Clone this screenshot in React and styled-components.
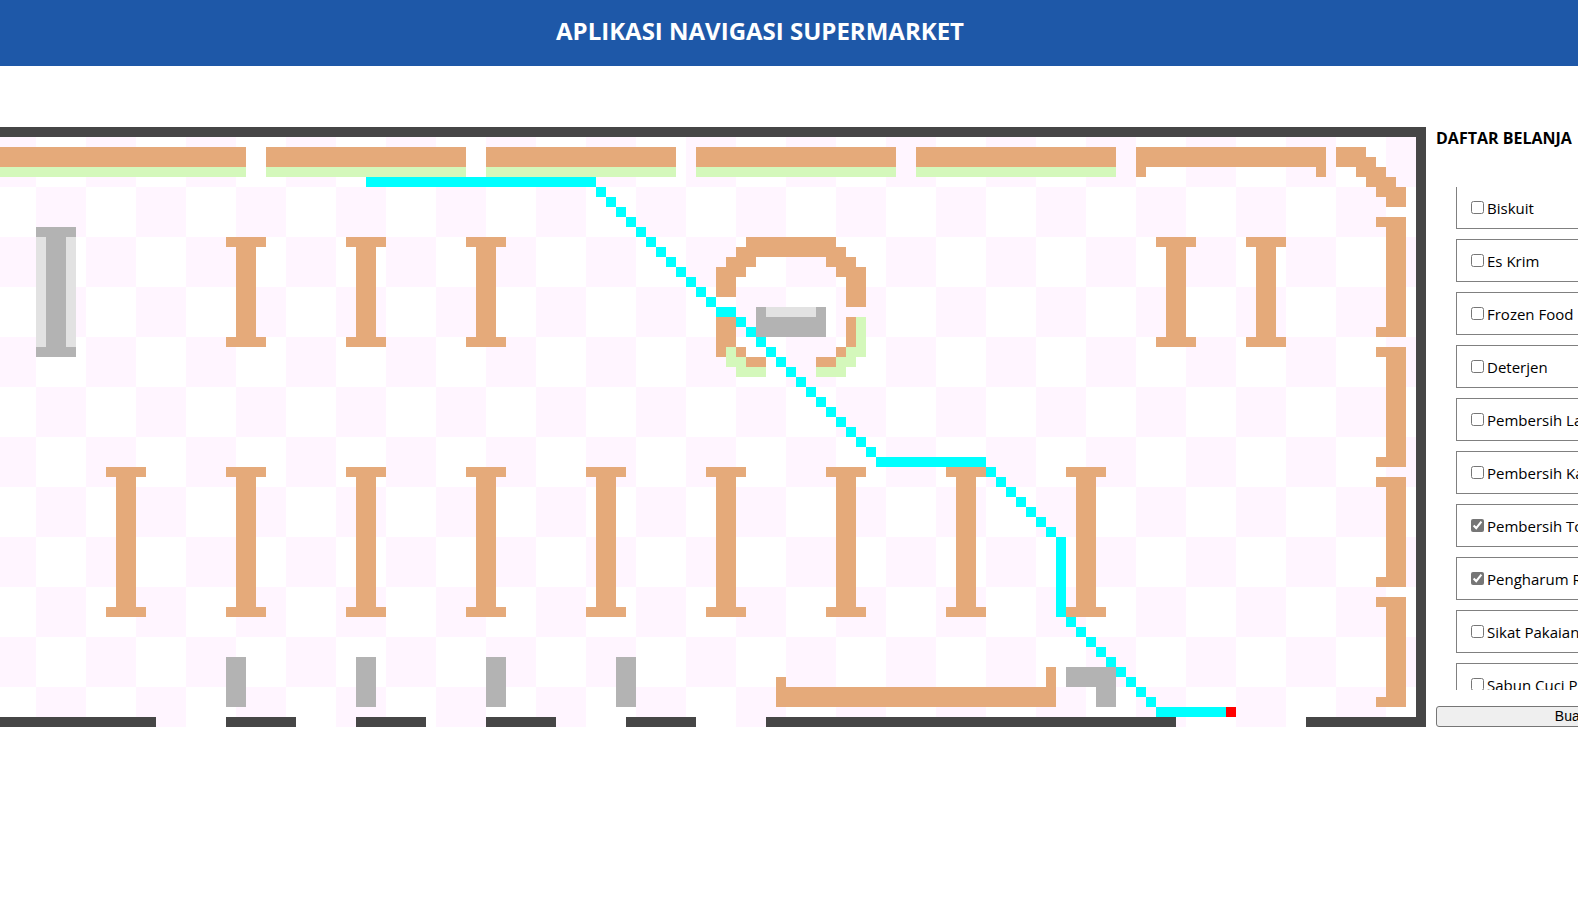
import React from "react";
import styled, { createGlobalStyle } from "styled-components";

const colors = {
  tile: "#fff5ff",
  wall: "#464646",
  shelf: "#e5aa7a",
  produce: "#d4f8bb",
  counter: "#b3b3b3",
  glass: "#e2e2e2",
  route: "#00ffff",
  start: "#ff0000",
};

// Every entry is [x, y, width, height] in grid cells.
const iShelf = (x, y, h) => [
  [x, y, 4, 1],
  [x + 1, y + 1, 2, h - 2],
  [x, y + h - 1, 4, 1],
];
const wallShelf = (y, h) => [
  [145, y, 1, 1],
  [146, y, 2, h],
  [145, y + h - 1, 1, 1],
];
const diagonal = (x, y, n) =>
  Array.from({ length: n }, (_, i) => [x + i, y + i, 1, 1]);

const walls = [
  [0, 0, 150, 1],
  [0, 0, 1, 60],
  [149, 0, 1, 60],
  [0, 59, 23, 1],
  [30, 59, 7, 1],
  [43, 59, 7, 1],
  [56, 59, 7, 1],
  [70, 59, 7, 1],
  [84, 59, 41, 1],
  [138, 59, 12, 1],
];

const topShelves = [
  [3, 29],
  [34, 20],
  [56, 19],
  [77, 20],
  [99, 20],
];

const shelves = [
  ...topShelves.map(([x, w]) => [x, 2, w, 2]),
  [121, 2, 19, 2],
  [121, 4, 1, 1],
  [139, 4, 1, 1],
  [141, 2, 3, 1],
  [141, 3, 4, 1],
  [143, 4, 3, 1],
  [144, 5, 3, 1],
  [145, 6, 3, 1],
  [146, 7, 2, 1],
  ...wallShelf(9, 12),
  ...wallShelf(22, 12),
  ...wallShelf(35, 11),
  ...wallShelf(47, 11),
  ...[30, 42, 54, 123, 132].flatMap((x) => iShelf(x, 11, 11)),
  ...[18, 30, 42, 54, 66, 78, 90, 102, 114].flatMap((x) => iShelf(x, 34, 15)),
  [85, 55, 1, 1],
  [112, 54, 1, 2],
  [85, 56, 28, 2],
  [82, 11, 9, 1],
  [81, 12, 11, 1],
  [80, 13, 3, 1],
  [90, 13, 3, 1],
  [79, 14, 3, 1],
  [91, 14, 3, 1],
  [79, 15, 2, 2],
  [92, 15, 2, 3],
  [79, 19, 2, 3],
  [79, 22, 1, 1],
  [81, 22, 1, 1],
  [82, 23, 2, 1],
  [92, 19, 1, 3],
  [91, 22, 1, 1],
  [89, 23, 2, 1],
];

const produce = [
  ...topShelves.map(([x, w]) => [x, 4, w, 1]),
  [80, 22, 1, 1],
  [80, 23, 2, 1],
  [81, 24, 3, 1],
  [93, 19, 1, 3],
  [92, 22, 2, 1],
  [91, 23, 2, 1],
  [89, 24, 3, 1],
];

const counters = [
  ...iShelf(11, 10, 13),
  [83, 18, 7, 3],
  ...[30, 43, 56, 69].map((x) => [x, 53, 2, 5]),
  [114, 54, 5, 2],
  [117, 56, 2, 2],
];

const glass = [
  [11, 11, 1, 11],
  [14, 11, 1, 11],
  [84, 18, 5, 1],
];

const route = [
  [44, 5, 23, 1],
  ...diagonal(67, 6, 12),
  [79, 18, 2, 1],
  ...diagonal(81, 19, 14),
  [95, 33, 11, 1],
  ...diagonal(106, 34, 7),
  [113, 41, 1, 8],
  ...diagonal(114, 49, 9),
  [123, 58, 7, 1],
];

const start = [[130, 58, 1, 1]];

const layers = [
  [colors.wall, walls],
  [colors.shelf, shelves],
  [colors.produce, produce],
  [colors.counter, counters],
  [colors.glass, glass],
  [colors.route, route],
  [colors.start, start],
];

const products = [
  ["Biskuit", false],
  ["Es Krim", false],
  ["Frozen Food", false],
  ["Deterjen", false],
  ["Pembersih Lantai", false],
  ["Pembersih Kaca", false],
  ["Pembersih Toilet", true],
  ["Pengharum Ruangan", true],
  ["Sikat Pakaian", false],
  ["Sabun Cuci Piring", false],
];

const GlobalStyle = createGlobalStyle`
  *, *::before, *::after { box-sizing: border-box; }
  body {
    margin: 0;
    background: #fff;
    color: #000;
    font: 15px/21px "Segoe UI", "Open Sans", "Noto Sans", sans-serif;
    overflow-x: hidden;
  }
`;

const Header = styled.header`
  display: flex;
  justify-content: center;
  padding: 15px 58px 19px 0;
  background: #1e58a8;
  color: #fff;
`;

const Title = styled.h1`
  margin: 0;
  font-size: 24px;
  line-height: 32px;
  font-weight: 700;
`;

const Main = styled.main`
  display: flex;
  gap: 10px;
  margin-top: 61px;
`;

const MapPane = styled.section`
  display: flex;
  flex: 1;
  min-width: 0;
  justify-content: flex-end;
  overflow: hidden;
`;

const StoreMap = styled.svg`
  display: block;
  flex: none;
  width: 1500px;
  height: 600px;
`;

const SidePane = styled.aside`
  flex: 0 0 142px;
  overflow: hidden;
`;

const ListForm = styled.form`
  display: flex;
  flex-direction: column;
  width: 300px;
  height: 600px;
`;

const ListTitle = styled.h2`
  margin: 1px 0 38px;
  font-size: 16px;
  line-height: 21px;
  font-weight: 700;
`;

const ListScroller = styled.div`
  flex: 1;
  min-height: 0;
  margin-bottom: 16px;
  padding-left: 20px;
  overflow: hidden;
`;

const ProductList = styled.ul`
  display: flex;
  flex-direction: column;
  gap: 10px;
  margin: -1px 0 0;
  padding: 0;
  list-style: none;
`;

const Product = styled.li`
  border: 1px solid gray;
`;

const ProductLabel = styled.label`
  display: flex;
  align-items: center;
  padding: 11px 10px 9px;
`;

const Check = styled.input`
  width: 13px;
  height: 13px;
  margin: 3px 3px 5px 4px;
  accent-color: #767676;
`;

const RouteButton = styled.button`
  height: 21px;
  padding: 0;
  border: 1px solid #767676;
  border-radius: 3px;
  background: #efefef;
  color: #000;
  font: 14px/19px "Liberation Sans", Arial, sans-serif;
`;

function FloorPlan() {
  return (
    <StoreMap
      viewBox="0 0 150 60"
      shapeRendering="crispEdges"
      role="img"
      aria-label="Denah supermarket"
    >
      <defs>
        <pattern
          id="tiles"
          x="1"
          y="1"
          width="10"
          height="10"
          patternUnits="userSpaceOnUse"
        >
          <rect width="10" height="10" fill="#fff" />
          <rect x="5" width="5" height="5" fill={colors.tile} />
          <rect y="5" width="5" height="5" fill={colors.tile} />
        </pattern>
      </defs>
      <rect width="150" height="60" fill="url(#tiles)" />
      {layers.map(([fill, cells]) => (
        <g key={fill} fill={fill}>
          {cells.map(([x, y, w, h]) => (
            <rect key={`${x}-${y}-${w}`} x={x} y={y} width={w} height={h} />
          ))}
        </g>
      ))}
    </StoreMap>
  );
}

export default function App() {
  return (
    <>
      <GlobalStyle />
      <Header>
        <Title>APLIKASI NAVIGASI SUPERMARKET</Title>
      </Header>
      <Main>
        <MapPane>
          <FloorPlan />
        </MapPane>
        <SidePane>
          <ListForm onSubmit={(e) => e.preventDefault()}>
            <ListTitle>DAFTAR BELANJA</ListTitle>
            <ListScroller>
              <ProductList>
                {products.map(([name, checked]) => (
                  <Product key={name}>
                    <ProductLabel>
                      <Check type="checkbox" defaultChecked={checked} />
                      {name}
                    </ProductLabel>
                  </Product>
                ))}
              </ProductList>
            </ListScroller>
            <RouteButton type="submit">Buat Rute</RouteButton>
          </ListForm>
        </SidePane>
      </Main>
    </>
  );
}
